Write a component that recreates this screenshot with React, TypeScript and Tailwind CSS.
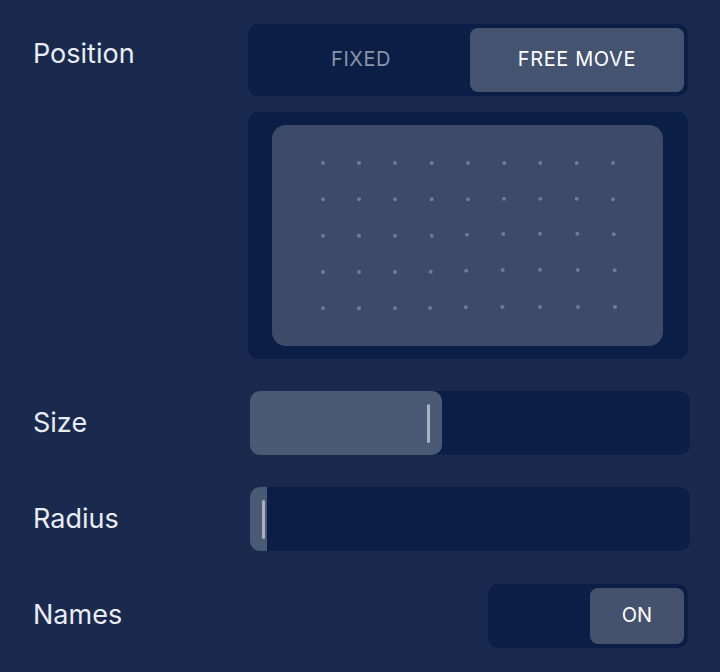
import React from "react";

const dots: [number, number][] = [
  [323,163],[359,163],[395,163],[431.7,163],[468,163],[504.3,163],[540.3,163],[576.7,163],[613,163],
  [323,199.3],[359,199.3],[395,199.3],[431.7,199.3],[468,199.3],[504,198.7],[540.3,198.7],[576.7,198.7],[613,199.3],
  [323,235.7],[359,235.7],[395,235.7],[431.7,235.7],[467,234.7],[503.3,234],[540,233.7],[577.3,233.7],[613.7,234.3],
  [323,272],[359,272],[395,272],[430.7,271.7],[466.3,270.7],[502.7,270],[540,269.7],[577.7,270],[614.7,270.3],
  [323,308.3],[359,308.3],[395,308.3],[430,308],[465.7,307.3],[502.3,307],[540,307],[578,307],[615,307],
];

export default function App() {
  return (
    <div
      className="w-[720px] h-[672px] bg-[#1a2a4e] text-[#e9ecf1] overflow-hidden"
      style={{ fontFamily: "Inter, 'Noto Sans', sans-serif" }}
    >
      <div className="flex flex-col pt-[24px]">
        {/* Position row */}
        <div className="flex">
          <div className="w-[248px] pl-[33px] pt-[13px] text-[27px] leading-[34px]">Position</div>
          <div className="w-[440px] h-[72px] rounded-[10px] bg-[#0b1e45] p-[4px] flex">
            <div className="flex-1 flex items-center justify-center pb-[3px] text-[20px] text-[#8a93a7] tracking-[0.5px]">
              FIXED
            </div>
            <div className="w-[214px] rounded-[8px] bg-[#44536f] flex items-center justify-center pb-[3px] text-[20px] text-white tracking-[0.6px]">
              FREE MOVE
            </div>
          </div>
        </div>

        {/* Canvas */}
        <div className="flex mt-[16px]">
          <div className="w-[248px]" />
          <div className="w-[440px] h-[247px] rounded-[10px] bg-[#0b1e45] pl-[24px] pr-[25px] py-[13px]">
            <div className="relative w-full h-full rounded-[14px] bg-[#3d4b69]">
              <svg className="absolute inset-0" width="391" height="221" viewBox="0 0 391 221">
                {dots.map(([x, y], i) => (
                  <circle key={i} cx={x - 272} cy={y - 125} r={2} fill="#6e7b95" />
                ))}
              </svg>
            </div>
          </div>
        </div>

        {/* Size */}
        <div className="flex items-center mt-[32px]">
          <div className="w-[250px] pl-[33px] text-[27px] leading-[34px]">Size</div>
          <div className="w-[440px] h-[64px] rounded-[10px] bg-[#0b1e45] flex">
            <div className="relative w-[192px] h-full rounded-[10px] bg-[#4a5a75]">
              <div className="absolute right-[12px] top-[13px] w-[3px] h-[39px] rounded-full bg-[#a9b1c2]" />
            </div>
          </div>
        </div>

        {/* Radius */}
        <div className="flex items-center mt-[32px]">
          <div className="w-[250px] pl-[33px] text-[27px] leading-[34px]">Radius</div>
          <div className="w-[440px] h-[64px] rounded-[10px] bg-[#0b1e45] flex">
            <div className="relative w-[17px] h-full rounded-l-[10px] bg-[#4a5a75]">
              <div className="absolute left-[12px] top-[13px] w-[3px] h-[39px] rounded-full bg-[#a9b1c2]" />
            </div>
          </div>
        </div>

        {/* Names */}
        <div className="flex items-center mt-[33px]">
          <div className="w-[488px] pl-[33px] pb-[2px] text-[27px] leading-[34px]">Names</div>
          <div className="w-[200px] h-[64px] rounded-[10px] bg-[#0b1e45] p-[4px] flex justify-end">
            <div className="w-[94px] h-full rounded-[8px] bg-[#44526e] flex items-center justify-center pb-[2px] text-[20px] text-white">
              ON
            </div>
          </div>
        </div>
      </div>
    </div>
  );
}
